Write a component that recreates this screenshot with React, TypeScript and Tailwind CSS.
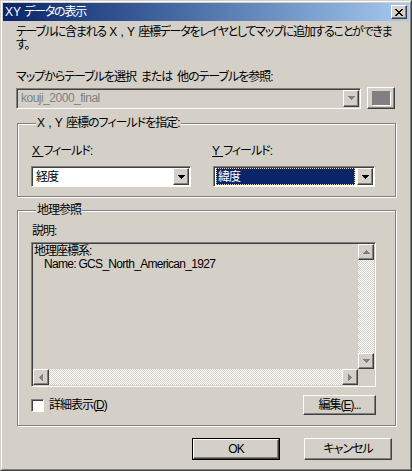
import React from "react";

const raised =
  "border border-t-white border-l-white border-r-[#404040] border-b-[#404040] shadow-[inset_-1px_-1px_0_#808080]";
const sunken =
  "border border-t-[#808080] border-l-[#808080] border-r-white border-b-white shadow-[inset_1px_1px_0_#404040]";
const dither = "bg-[repeating-conic-gradient(#ffffff_0_25%,#d4d0c8_0_50%)] bg-[length:2px_2px]";

const DownArrow = ({ color = "#000" }: { color?: string }) => (
  <svg width="7" height="4" shapeRendering="crispEdges">
    <path d="M0 0h7v1H0zM1 1h5v1H1zM2 2h3v1H2zM3 3h1v1H3z" fill={color} />
  </svg>
);

const UpArrow = ({ color = "#808080" }: { color?: string }) => (
  <svg width="7" height="4" shapeRendering="crispEdges">
    <path d="M3 0h1v1H3zM2 1h3v1H2zM1 2h5v1H1zM0 3h7v1H0z" fill={color} />
  </svg>
);

const LeftArrow = () => (
  <svg width="4" height="7" shapeRendering="crispEdges">
    <path d="M3 0h1v7H3zM2 1h1v5H2zM1 2h1v3H1zM0 3h1v1H0z" fill="#808080" />
  </svg>
);

const RightArrow = () => (
  <svg width="4" height="7" shapeRendering="crispEdges">
    <path d="M0 0h1v7H0zM1 1h1v5H1zM2 2h1v3H2zM3 3h1v1H3z" fill="#808080" />
  </svg>
);

function ScrollBtn({ children }: { children: React.ReactNode }) {
  return (
    <div className={`flex h-[16px] w-[16px] shrink-0 items-center justify-center bg-[#d4d0c8] ${raised}`}>
      {children}
    </div>
  );
}

type ComboProps = {
  text: string;
  width: string;
  disabled?: boolean;
  selected?: boolean;
};

function Combo({ text, width, disabled, selected }: ComboProps) {
  return (
    <div className={`flex h-[21px] p-px ${width} ${sunken} ${disabled ? "bg-[#d4d0c8]" : "bg-white"}`}>
      <div className="flex min-w-0 flex-1 items-center pl-px pr-[2px]">
        {selected ? (
          <span className="flex h-full w-full items-center border border-dotted border-[#e8dca0] bg-[#0a246a] pl-px text-white">
            {text}
          </span>
        ) : (
          <span className={`pl-[2px] ${disabled ? "tracking-[-0.5px] text-[#808080]" : "text-black"}`}>{text}</span>
        )}
      </div>
      <div className={`flex w-[16px] shrink-0 items-center justify-center bg-[#d4d0c8] ${raised}`}>
        <DownArrow color={disabled ? "#808080" : "#000"} />
      </div>
    </div>
  );
}

function Button({ children, width, primary }: { children: React.ReactNode; width: string; primary?: boolean }) {
  const inner = (
    <div className={`flex h-full items-center justify-center bg-[#d4d0c8] ${raised}`}>{children}</div>
  );
  return primary ? (
    <div className={`h-[22px] border border-black ${width}`}>{inner}</div>
  ) : (
    <div className={`h-[22px] ${width}`}>{inner}</div>
  );
}

function Group({ title, children, className }: { title: React.ReactNode; children: React.ReactNode; className?: string }) {
  return (
    <fieldset
      className={`ml-px w-[379px] border border-[#808080] shadow-[inset_1px_1px_0_#ffffff,1px_1px_0_#ffffff] ${className ?? ""}`}
    >
      <legend className="ml-[5px] bg-[#d4d0c8] px-px leading-[12px]">{title}</legend>
      {children}
    </fieldset>
  );
}

export default function App() {
  return (
    <div className="h-[471px] w-[412px] overflow-hidden border border-t-[#d4d0c8] border-l-[#d4d0c8] border-r-[#404040] border-b-[#404040] bg-[#d4d0c8] font-['Liberation_Sans','Noto_Sans_CJK_JP',sans-serif] text-[12px] tracking-[-1px] text-black [font-feature-settings:'palt']">
      <div className="h-full border border-t-white border-l-white border-r-[#808080] border-b-[#808080] p-px">
        <div className="flex h-[18px] items-center justify-between bg-gradient-to-r from-[#0a246a] to-[#a6caf0] pl-[2px] pr-[2px]">
          <span className="leading-[18px] tracking-[-1.2px] text-white">
            <span className="tracking-[0px]">XY </span>データの表示
          </span>
          <div className={`flex h-[14px] w-[16px] items-center justify-center bg-[#d4d0c8] ${raised}`}>
            <svg width="8" height="7" shapeRendering="crispEdges">
              <path
                d="M0 0h2v1H0zM6 0h2v1H6zM1 1h2v1H1zM5 1h2v1H5zM2 2h4v1H2zM3 3h2v1H3zM2 4h4v1H2zM1 5h2v1H1zM5 5h2v1H5zM0 6h2v1H0zM6 6h2v1H6z"
                fill="#000"
              />
            </svg>
          </div>
        </div>

        <div className="pl-[13px]">
          <p className="mt-[5px] whitespace-nowrap leading-[13px] tracking-[-1.25px]">
            テーブルに含まれる<span className="tracking-[0px]"> X , Y </span>座標データをレイヤとしてマップに追加することができま
            <br />
            す。
          </p>

          <div className="mt-[18px] leading-[14px]">マップからテーブルを選択&nbsp;&nbsp;または&nbsp;&nbsp;他のテーブルを参照:</div>

          <div className="mt-[3px] flex h-[22px] items-center gap-[6px]">
            <Combo text="kouji_2000_final" width="w-[345px]" disabled />
            <div className={`flex h-[22px] w-[28px] items-center justify-center bg-[#d4d0c8] ${raised}`}>
              <div className="h-[14px] w-[18px] bg-[#808080] shadow-[1px_1px_0_#ffffff]" />
            </div>
          </div>

          <Group
            title={
              <>
                <span className="tracking-[0px]">X , Y </span>座標のフィールドを指定:
              </>
            }
            className="mt-[8px] pb-[9px] pl-[13px]"
          >
            <div className="mt-[15px] flex leading-[14px]">
              <span className="w-[181px] pl-px">
                <span className="underline tracking-[0px]">X </span>フィールド:
              </span>
              <span>
                <span className="underline tracking-[0px]">Y </span>フィールド:
              </span>
            </div>
            <div className="mt-[8px] flex gap-[22px]">
              <Combo text="経度" width="w-[160px]" />
              <Combo text="緯度" width="w-[162px]" selected />
            </div>
          </Group>

          <Group title="地理参照" className="mt-[7px] pb-[10px] pl-[13px]">
            <div className="mt-[8px] pl-px leading-[14px]">説明:</div>
            <div className={`mt-[4px] flex h-[145px] w-[345px] flex-col p-px ${sunken}`}>
              <div className="flex min-h-0 flex-1">
                <div className="flex-1 pl-px pt-px leading-[13px]">
                  <div>地理座標系:</div>
                  <div className="pl-[10px] tracking-[-0.7px]">Name: GCS_North_American_1927</div>
                </div>
                <div className="flex w-[16px] flex-col">
                  <ScrollBtn>
                    <UpArrow />
                  </ScrollBtn>
                  <div className={`flex-1 ${dither}`} />
                  <ScrollBtn>
                    <DownArrow color="#808080" />
                  </ScrollBtn>
                </div>
              </div>
              <div className="flex h-[16px]">
                <ScrollBtn>
                  <LeftArrow />
                </ScrollBtn>
                <div className={`flex-1 ${dither}`} />
                <ScrollBtn>
                  <RightArrow />
                </ScrollBtn>
                <div className="w-[16px]" />
              </div>
            </div>
            <div className="mt-[8px] flex h-[20px] items-center justify-between pr-[19px]">
              <div className="flex items-center gap-[5px]">
                <div className={`h-[13px] w-[13px] bg-white ${sunken}`} />
                <span>
                  詳細表示(<span className="underline">D</span>)
                </span>
              </div>
              <div className="h-[20px] w-[73px]">
                <div className={`flex h-full items-center justify-center bg-[#d4d0c8] ${raised}`}>
                  編集(<span className="underline">E</span>)...
                </div>
              </div>
            </div>
          </Group>

          <div className="mt-[12px] flex justify-end gap-[24px] pr-[17px]">
            <Button width="w-[88px]" primary>
              OK
            </Button>
            <Button width="w-[88px]">キャンセル</Button>
          </div>
        </div>
      </div>
    </div>
  );
}
